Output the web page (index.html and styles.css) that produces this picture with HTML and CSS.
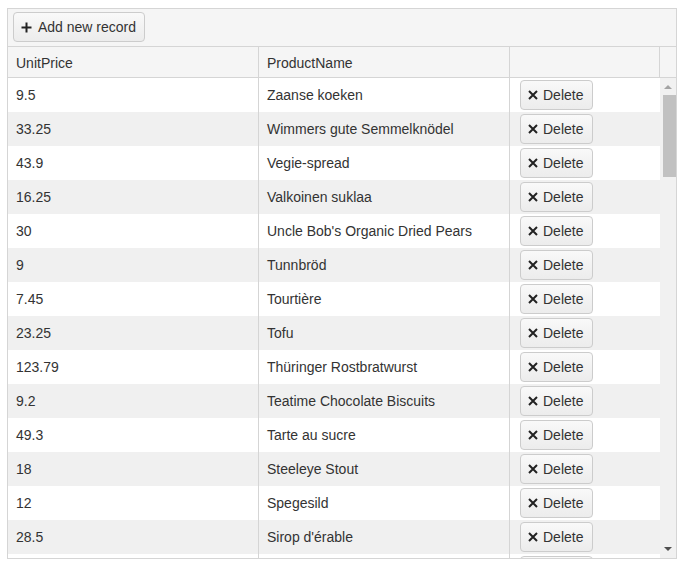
FILE: index.html
```html
<!DOCTYPE html>
<html>
<head>
<meta charset="utf-8">
<link rel="stylesheet" href="styles.css">
</head>
<body>
<div class="grid">
  <div class="toolbar">
    <button class="btn add"><svg width="11" height="11" viewBox="0 0 11 11"><path d="M5.5 0.5v10M0.5 5.5h10" stroke="#222" stroke-width="2"/></svg><span>Add new record</span></button>
  </div>
  <div class="head">
    <div class="hcell c1">UnitPrice</div>
    <div class="hcell c2">ProductName</div>
    <div class="hcell c3"></div>
    <div class="hspace"></div>
  </div>
  <div class="bodywrap">
    <div class="content" id="content"></div>
    <div class="scrollbar">
      <div class="arrow up"></div>
      <div class="thumb"></div>
      <div class="track-fill"></div>
      <div class="arrow down"></div>
    </div>
  </div>
</div>
<script>
var data = [
["9.5","Zaanse koeken"],
["33.25","Wimmers gute Semmelknödel"],
["43.9","Vegie-spread"],
["16.25","Valkoinen suklaa"],
["30","Uncle Bob's Organic Dried Pears"],
["9","Tunnbröd"],
["7.45","Tourtière"],
["23.25","Tofu"],
["123.79","Thüringer Rostbratwurst"],
["9.2","Teatime Chocolate Biscuits"],
["49.3","Tarte au sucre"],
["18","Steeleye Stout"],
["12","Spegesild"],
["28.5","Sirop d'érable"],
["15","Sir Rodney's Scones"]
];
var icon = '<svg width="10" height="10" viewBox="0 0 10 10"><path d="M1 1L9 9M9 1L1 9" stroke="#222" stroke-width="2"/></svg>';
var html = "";
data.forEach(function(r, i){
  html += '<div class="row' + (i % 2 ? ' alt' : '') + '"><div class="cell c1">' + r[0] + '</div><div class="cell c2">' + r[1] + '</div><div class="cell c3"><button class="btn del">' + icon + '<span>Delete</span></button></div></div>';
});
document.getElementById("content").innerHTML = html;
</script>
</body>
</html>
```
FILE: styles.css
```css
* { box-sizing: border-box; }
html, body { margin: 0; padding: 0; background: #fff; }
body { font-family: "Liberation Sans", Arial, sans-serif; font-size: 14px; color: #333; }
.grid {
  margin: 8px 0 0 7px;
  width: 670px;
  height: 551px;
  border: 1px solid #d5d5d5;
  display: flex;
  flex-direction: column;
}
.toolbar {
  height: 38px;
  background: #f5f5f5;
  border-bottom: 1px solid #d5d5d5;
  padding: 3px 0 0 5px;
}
.btn {
  font-family: inherit;
  font-size: 14px;
  color: #333;
  background: linear-gradient(#f9f9f9, #ececec);
  border: 1px solid #ccc;
  border-radius: 4px;
  display: flex;
  align-items: center;
  padding: 0;
  cursor: pointer;
}
.btn.add { height: 30px; width: 132px; padding-left: 7px; gap: 6px; }
.btn.del { height: 30px; width: 73px; padding-left: 7px; gap: 5px; }
.head {
  display: flex;
  height: 31px;
  background: #f5f5f5;
  border-bottom: 1px solid #d5d5d5;
}
.hcell {
  display: flex;
  align-items: center;
  padding: 2px 0 0 8px;
}
.hcell.c1 { width: 250px; }
.hcell.c2 { width: 251px; border-left: 1px solid #d5d5d5; }
.hcell.c3 { width: 151px; border-left: 1px solid #d5d5d5; border-right: 1px solid #d5d5d5; }
.hspace { width: 16px; }
.bodywrap {
  flex: 1;
  display: flex;
  overflow: hidden;
}
.content {
  width: 652px;
  overflow: hidden;
}
.row {
  display: flex;
  height: 34px;
  background: #fff;
}
.row.alt { background: #f0f0f0; }
.cell {
  display: flex;
  align-items: center;
  padding-left: 8px;
}
.cell.c1 { width: 250px; }
.cell.c2 { width: 251px; border-left: 1px solid #d5d5d5; padding-left: 8px; }
.cell.c3 { width: 151px; border-left: 1px solid #d5d5d5; padding-left: 10px; }
.scrollbar {
  width: 16px;
  background: #f1f1f1;
  display: flex;
  flex-direction: column;
  align-items: center;
}
.arrow {
  width: 0;
  height: 0;
  border-left: 4px solid transparent;
  border-right: 4px solid transparent;
}
.arrow.up { border-bottom: 4px solid #a3a3a3; margin-top: 7px; }
.arrow.down { border-top: 4px solid #505050; margin-bottom: 7px; }
.thumb {
  width: 13px;
  margin-left: 3px;
  height: 82px;
  background: #c1c1c1;
  margin-top: 6px;
}
.track-fill { flex: 1; }
```
